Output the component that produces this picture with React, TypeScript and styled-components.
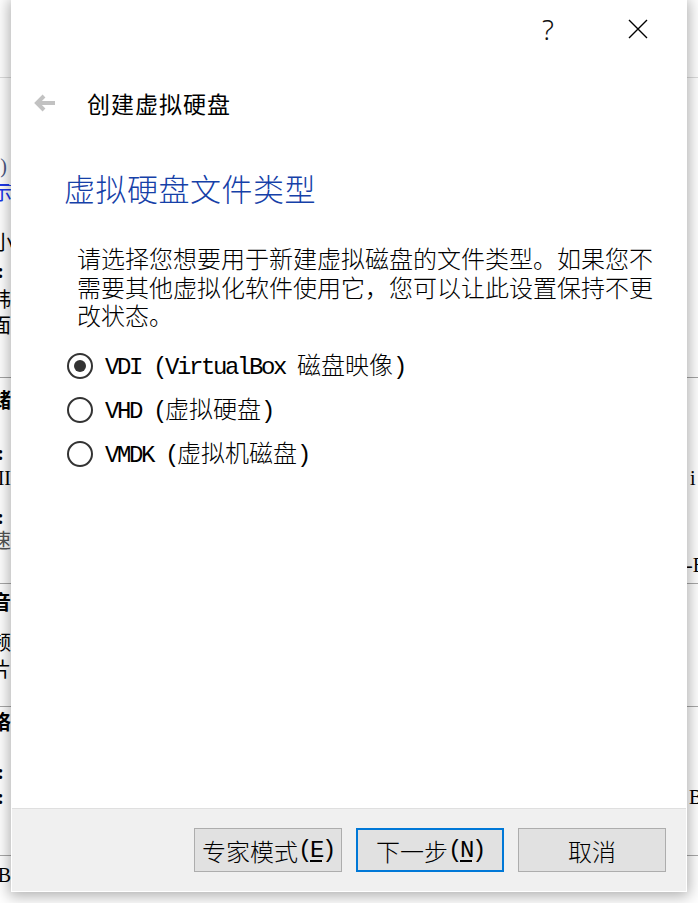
import React from 'react';
import styled, { createGlobalStyle } from 'styled-components';

const GlobalStyle = createGlobalStyle`
  html, body {
    margin: 0;
    padding: 0;
    background: #ffffff;
  }
  body {
    width: 698px;
    height: 903px;
    overflow: hidden;
  }
  #root {
    position: relative;
    width: 698px;
    height: 903px;
    overflow: hidden;
  }
`;

/* ---------- the main window that peeks out behind the dialog ---------- */

const Details = styled.div`
  display: flex;
  flex-direction: column;
  width: 698px;
  font-family: "Liberation Serif", "Noto Sans CJK SC", serif;
  font-size: 20px;
  color: #000;
`;

const BgRow = styled.div<{ $h: number; $line?: string }>`
  box-sizing: border-box;
  height: ${p => p.$h}px;
  display: flex;
  align-items: center;
  border-bottom: ${p => (p.$line ? `1px solid ${p.$line}` : 'none')};
`;

const BgLeft = styled.div<{ $rule?: string }>`
  box-sizing: border-box;
  width: 11px;
  height: 100%;
  display: flex;
  align-items: center;
  justify-content: flex-end;
  border-top: ${p => (p.$rule ? `1px solid ${p.$rule}` : 'none')};
`;

const BgText = styled.span<{ $edge: number; $color?: string; $bold?: boolean }>`
  white-space: nowrap;
  margin-right: ${p => 11 - p.$edge}px;
  color: ${p => p.$color || '#000'};
  font-weight: ${p => (p.$bold ? 700 : 400)};
  line-height: 22px;
`;

const BgRight = styled.div<{ $start: number }>`
  margin-left: auto;
  width: ${p => 698 - p.$start}px;
  white-space: nowrap;
  line-height: 22px;
`;

type Row = {
  h: number;
  line?: string;
  left?: string;
  edge?: number;
  color?: string;
  bold?: boolean;
  rule?: string;
  right?: string;
  start?: number;
};

const rows: Row[] = [
  { h: 78, line: '#dcdcdc' },
  { h: 76 },
  { h: 24, left: ')', edge: 7, color: '#4b5680' },
  { h: 7 },
  { h: 15, left: '显示', edge: 12, color: '#1a35e8', rule: '#2a40e8' },
  { h: 30 },
  { h: 26, left: '大小', edge: 13 },
  { h: 30, left: ':', edge: 4, bold: true },
  { h: 27, left: '帏', edge: 11 },
  { h: 25, left: '画面', edge: 11 },
  { h: 40, line: '#a4a4a4' },
  { h: 46, left: '存储', edge: 11, bold: true },
  { h: 17 },
  { h: 24, left: ':', edge: 4, bold: true },
  { h: 25, left: 'II', edge: 11, right: 'i', start: 690 },
  { h: 15 },
  { h: 24, left: ':', edge: 4, bold: true },
  { h: 23, left: '速', edge: 11, color: '#555' },
  { h: 26, right: '-B', start: 686 },
  { h: 6, line: '#a8a8a8' },
  { h: 38, left: '声音', edge: 11, bold: true },
  { h: 6 },
  { h: 30, left: '频', edge: 11 },
  { h: 24, left: '片', edge: 11 },
  { h: 25, line: '#a8a8a8' },
  { h: 32, left: '网络', edge: 11, bold: true },
  { h: 21 },
  { h: 24, left: ':', edge: 4, bold: true },
  { h: 26, left: ':', edge: 4, bold: true, right: 'B', start: 689 },
  { h: 46, line: '#a8a8a8' },
  { h: 38, left: 'B', edge: 11 },
];

/* ---------- dialog ---------- */

const Dialog = styled.div`
  position: absolute;
  left: 11px;
  top: -1px;
  width: 676px;
  height: 893px;
  box-sizing: border-box;
  border: 1px solid #ffffff;
  background: #ffffff;
  box-shadow: 0 2px 14px 2px rgba(0, 0, 0, 0.32);
  display: flex;
  flex-direction: column;
`;

const TitleBar = styled.div`
  height: 58px;
  flex: none;
  display: flex;
  justify-content: flex-end;
  align-items: center;
  gap: 46px;
  padding-right: 26px;
`;

const TitleButton = styled.div`
  width: 44px;
  height: 58px;
  display: flex;
  align-items: center;
  justify-content: center;
  font-family: "Noto Sans", sans-serif;
  font-weight: 300;
  font-size: 28px;
  color: #111;
`;

const Header = styled.div`
  flex: none;
  height: 44px;
  margin-top: 23px;
  padding-left: 20px;
  display: flex;
  align-items: center;
  gap: 31px;
`;

const HeaderText = styled.div`
  font-family: "Noto Sans CJK SC", sans-serif;
  font-size: 23px;
  letter-spacing: 1px;
  color: #000;
`;

const Body = styled.div`
  flex: 1;
  padding-left: 52px;
  display: flex;
  flex-direction: column;
`;

const PageTitle = styled.div`
  margin-top: 43px;
  font-family: "Noto Sans CJK SC", sans-serif;
  font-weight: 300;
  font-size: 31px;
  line-height: 40px;
  letter-spacing: 0.5px;
  color: #1540a8;
`;

const Description = styled.div`
  margin-top: 36px;
  margin-left: 13px;
  width: 580px;
  font-family: "Noto Sans CJK SC", sans-serif;
  font-weight: 300;
  font-size: 24px;
  line-height: 28.5px;
  color: #000;
`;

const RadioList = styled.div`
  margin-top: 14.5px;
  display: flex;
  flex-direction: column;
`;

const RadioRow = styled.label`
  height: 44px;
  margin-left: 3px;
  display: flex;
  align-items: center;
  gap: 12px;
`;

const RadioCircle = styled.span<{ $checked?: boolean }>`
  box-sizing: border-box;
  width: 26px;
  height: 26px;
  border: 2px solid #333;
  border-radius: 50%;
  display: flex;
  align-items: center;
  justify-content: center;

  &::after {
    content: '';
    width: 12px;
    height: 12px;
    border-radius: 50%;
    background: ${p => (p.$checked ? '#333' : 'transparent')};
  }
`;

const RadioLabel = styled.span`
  font-family: "Noto Sans CJK SC", sans-serif;
  font-weight: 300;
  font-size: 24px;
  line-height: 30px;
  color: #000;
  white-space: nowrap;
`;

const Latin = styled.span`
  font-family: "Liberation Mono", monospace;
  font-weight: 400;
  font-size: 24px;
  letter-spacing: -2.4px;
`;

const Footer = styled.div`
  flex: none;
  box-sizing: border-box;
  height: 83px;
  border-top: 1px solid #dfdfdf;
  background: #f0f0f0;
  display: flex;
  justify-content: flex-end;
  align-items: center;
  gap: 14px;
  padding-right: 20px;
`;

const Button = styled.button<{ $default?: boolean }>`
  box-sizing: border-box;
  width: 148px;
  height: 44px;
  margin: 0;
  padding: 0;
  background: #e1e1e1;
  border: ${p => (p.$default ? '2px solid #0078d7' : '1px solid #adadad')};
  border-radius: 0;
  font-family: "Noto Sans CJK SC", sans-serif;
  font-weight: 300;
  font-size: 24px;
  color: #000;
  display: flex;
  align-items: center;
  justify-content: center;
  white-space: nowrap;
`;

const Mnemonic = styled.span`
  text-decoration: underline;
  text-underline-offset: 3px;
`;

const BackArrow = () => (
  <svg width="24" height="20" viewBox="0 0 24 20">
    <path d="M23 10H5M12 3L5 10L12 17" fill="none" stroke="#c2c2c2" strokeWidth="4" strokeLinejoin="miter" />
  </svg>
);

const CloseIcon = () => (
  <svg width="20" height="20" viewBox="0 0 20 20">
    <path d="M1 1L19 19M19 1L1 19" stroke="#000" strokeWidth="1.4" />
  </svg>
);

const formats = [
  { pre: 'VDI (VirtualBox ', cjk: '磁盘映像', checked: true },
  { pre: 'VHD (', cjk: '虚拟硬盘', checked: false },
  { pre: 'VMDK (', cjk: '虚拟机磁盘', checked: false },
];

export default function App() {
  return (
    <>
      <GlobalStyle />
      <Details>
        {rows.map((r, i) => (
          <BgRow key={i} $h={r.h} $line={r.line}>
            <BgLeft $rule={r.rule}>
              {r.left && (
                <BgText $edge={r.edge ?? 11} $color={r.color} $bold={r.bold}>
                  {r.left}
                </BgText>
              )}
            </BgLeft>
            {r.right && <BgRight $start={r.start ?? 689}>{r.right}</BgRight>}
          </BgRow>
        ))}
      </Details>

      <Dialog>
        <TitleBar>
          <TitleButton>?</TitleButton>
          <TitleButton>
            <CloseIcon />
          </TitleButton>
        </TitleBar>

        <Header>
          <BackArrow />
          <HeaderText>创建虚拟硬盘</HeaderText>
        </Header>

        <Body>
          <PageTitle>虚拟硬盘文件类型</PageTitle>
          <Description>
            请选择您想要用于新建虚拟磁盘的文件类型。如果您不需要其他虚拟化软件使用它，您可以让此设置保持不更改状态。
          </Description>
          <RadioList>
            {formats.map(f => (
              <RadioRow key={f.pre}>
                <RadioCircle $checked={f.checked} />
                <RadioLabel>
                  <Latin>{f.pre}</Latin>
                  {f.cjk}
                  <Latin>)</Latin>
                </RadioLabel>
              </RadioRow>
            ))}
          </RadioList>
        </Body>

        <Footer>
          <Button>
            专家模式<Latin>(<Mnemonic>E</Mnemonic>)</Latin>
          </Button>
          <Button $default>
            下一步<Latin>(<Mnemonic>N</Mnemonic>)</Latin>
          </Button>
          <Button>取消</Button>
        </Footer>
      </Dialog>
    </>
  );
}
